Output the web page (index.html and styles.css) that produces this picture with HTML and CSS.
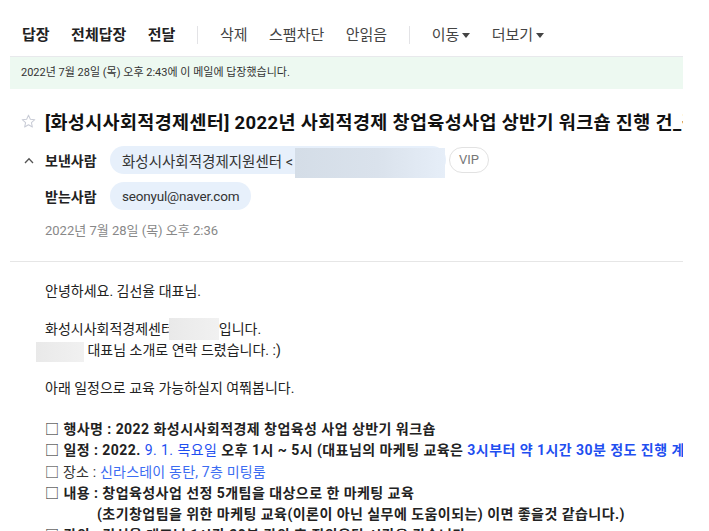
FILE: index.html
```html
<!DOCTYPE html>
<html lang="ko">
<head>
<meta charset="utf-8">
<title>메일 읽기</title>
<link rel="stylesheet" href="styles.css">
</head>
<body>
<div class="page">
  <div class="toolbar">
    <span class="tb-item strong">답장</span>
    <span class="tb-item strong">전체답장</span>
    <span class="tb-item strong">전달</span>
    <span class="tb-sep"></span>
    <span class="tb-item">삭제</span>
    <span class="tb-item">스팸차단</span>
    <span class="tb-item">안읽음</span>
    <span class="tb-sep"></span>
    <span class="tb-item">이동<i class="caret"></i></span>
    <span class="tb-item">더보기<i class="caret"></i></span>
  </div>
  <div class="notice">2022년 7월 28일 (목) 오후 2:43에 이 메일에 답장했습니다.</div>

  <div class="subject">
    <svg class="star" viewBox="0 0 16 16" width="15" height="15"><path d="M8 1.2 L9.95 5.6 L14.7 6.05 L11.1 9.2 L12.15 13.9 L8 11.45 L3.85 13.9 L4.9 9.2 L1.3 6.05 L6.05 5.6 Z" fill="none" stroke="#c9ccd6" stroke-width="1.1" stroke-linejoin="round"/></svg>
    <div class="subject-text">[화성시사회적경제센터] 2022년 사회적경제 창업육성사업 상반기 워크숍 진행 건_김선율 대표님</div>
  </div>

  <div class="row">
    <svg class="toggle" viewBox="0 0 10 7" width="10" height="7"><polyline points="1,6 5,1.8 9,6" fill="none" stroke="#555" stroke-width="1.3"/></svg>
    <span class="label">보낸사람</span>
    <span class="chip from">화성시사회적경제지원센터 &lt;<span class="blur"></span></span>
    <span class="vip">VIP</span>
  </div>
  <div class="row to">
    <span class="label">받는사람</span>
    <span class="chip email">seonyul@naver.com</span>
  </div>
  <div class="date">2022년 7월 28일 (목) 오후 2:36</div>
  <div class="divider"></div>

  <div class="body">
    <div class="line">안녕하세요. 김선율 대표님.</div>
    <div class="gap"></div>
    <div class="line">화성시사회적경제센터<span class="mask m1"></span>입니다.</div>
    <div class="line"><span class="mask m2"></span> 대표님 소개로 연락 드렸습니다. :)</div>
    <div class="gap"></div>
    <div class="line">아래 일정으로 교육 가능하실지 여쭤봅니다.</div>
    <div class="gap gap-l"></div>
    <div class="line item b"><span class="box">□</span> 행사명 : 2022 화성시사회적경제 창업육성 사업 상반기 워크숍</div>
    <div class="line item b"><span class="box">□</span> 일정 : 2022. <span class="blue reg">9. 1. 목요일</span> 오후 1시 ~ 5시 (대표님의 마케팅 교육은 <span class="blue">3시부터 약 1시간 30분 정도 진행 계획입니다.)</span></div>
    <div class="line item soft"><span class="box">□</span> 장소 : <span class="blue2">신라스테이 동탄, 7층 미팅룸</span></div>
    <div class="line item b"><span class="box">□</span> 내용 : 창업육성사업 선정 5개팀을 대상으로 한 마케팅 교육</div>
    <div class="line item b indent">(초기창업팀을 위한 마케팅 교육(이론이 아닌 실무에 도움이되는) 이면 좋을것 같습니다.)</div>
    <div class="line item b"><span class="box">□</span> 강의 : 김선율 대표님 1시간 30분 강의 후 질의응답 시간을 갖습니다.</div>
  </div>
</div>
</body>
</html>
```

FILE: styles.css
```css
* {
  box-sizing: border-box;
  margin: 0;
  padding: 0;
}

html, body {
  width: 709px;
  height: 531px;
  overflow: hidden;
  background: #ffffff;
}

body {
  font-family: Roboto, "Noto Sans CJK KR", sans-serif;
  color: #222;
}

.page {
  margin-left: 10px;
  width: 673px;
  overflow: hidden;
}

/* toolbar */
.toolbar {
  display: flex;
  align-items: center;
  height: 57px;
  padding: 14px 0 0 12px;
  border-bottom: 1px solid #e8e9ec;
  font-size: 15px;
}

.tb-item {
  display: flex;
  align-items: center;
  color: #444;
  line-height: 20px;
  white-space: nowrap;
  margin-right: 21.5px;
}

.tb-item.strong {
  font-weight: 700;
  color: #222;
}

.tb-sep {
  width: 1px;
  height: 18px;
  background: #e3e3e6;
  margin-right: 22px;
}

.caret {
  display: inline-block;
  width: 0;
  height: 0;
  border-left: 4px solid transparent;
  border-right: 4px solid transparent;
  border-top: 5px solid #444;
  margin-left: 3px;
}

/* notice */
.notice {
  height: 32px;
  line-height: 32px;
  background: #edf9f1;
  padding-left: 11px;
  font-size: 11px;
  color: #333;
}

/* subject */
.subject {
  display: flex;
  align-items: center;
  height: 34px;
  margin-top: 15px;
  padding-left: 11px;
}

.star {
  flex: none;
  margin-right: 9px;
}

.subject-text {
  font-size: 18.5px;
  letter-spacing: 0.35px;
  font-weight: 700;
  color: #111;
  white-space: nowrap;
  overflow: hidden;
}

/* sender / receiver */
.row {
  display: flex;
  align-items: center;
  height: 28px;
  margin-top: 8px;
}

.row.to {
  padding-left: 35px;
}

.toggle {
  flex: none;
  margin-left: 14px;
  margin-right: 11px;
}

.label {
  flex: none;
  width: 65px;
  font-size: 14px;
  font-weight: 700;
  color: #222;
}

.chip {
  display: flex;
  align-items: center;
  height: 28px;
  border-radius: 14px;
  background: #e7f0fb;
  padding: 0 12px;
  font-size: 14.5px;
  color: #333;
  white-space: nowrap;
}

.chip.from {
  padding-right: 1px;
}

.chip.email {
  font-size: 13.5px;
  letter-spacing: -0.2px;
}

.blur {
  align-self: flex-start;
  display: block;
  width: 150px;
  height: 30px;
  margin-top: 2px;
  margin-left: 2px;
  background: linear-gradient(90deg, #d4dde7 0%, #dae2ec 55%, #e6eef8 100%);
}

.vip {
  margin-left: 3px;
  height: 26px;
  line-height: 24px;
  padding: 0 9px;
  border: 1px solid #e2e2e2;
  border-radius: 13px;
  font-size: 13px;
  color: #777;
}

.date {
  margin-top: 11px;
  padding-left: 35px;
  font-size: 13px;
  line-height: 20px;
  color: #888;
}

.divider {
  margin-top: 20px;
  height: 1px;
  background: #e6e6e6;
}

/* body */
.body {
  padding: 19px 0 0 35px;
  font-size: 14px;
  line-height: 21px;
  color: #222;
}

.line {
  height: 21px;
  white-space: nowrap;
}

.line.item {
  height: 21.25px;
}

.gap {
  height: 17px;
}

.gap-l {
  height: 20px;
}

.b {
  font-weight: 700;
  letter-spacing: 0.45px;
}

.box {
  font-weight: 400;
}

.soft {
  color: #333;
  letter-spacing: 0.2px;
}

.indent {
  padding-left: 52px;
}

.blue {
  color: #1f4ff0;
}

.blue.reg {
  font-weight: 400;
}

.blue2 {
  color: #3b6cf2;
}

.mask {
  display: inline-block;
  vertical-align: middle;
  height: 22px;
  background: linear-gradient(90deg, #e9e9e9, #f1f1f1);
}

.m1 {
  width: 50px;
  margin-left: -5px;
  margin-top: -2px;
}

.m2 {
  width: 48px;
  margin-left: -9px;
  margin-top: 2px;
  height: 20px;
}
```
